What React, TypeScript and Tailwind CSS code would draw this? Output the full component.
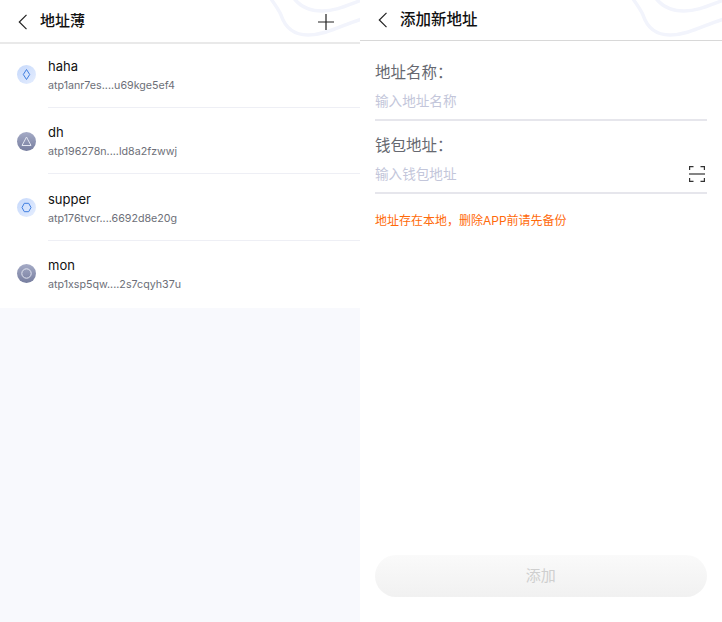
type Contact = {
  name: string;
  address: string;
  shape: "diamond" | "triangle" | "hexagon" | "circle";
};

const contacts: Contact[] = [
  { name: "haha", address: "atp1anr7es....u69kge5ef4", shape: "diamond" },
  { name: "dh", address: "atp196278n....ld8a2fzwwj", shape: "triangle" },
  { name: "supper", address: "atp176tvcr....6692d8e20g", shape: "hexagon" },
  { name: "mon", address: "atp1xsp5qw....2s7cqyh37u", shape: "circle" },
];

const fontStack = "font-['Inter','Noto_Sans_CJK_SC',sans-serif]";

function HeaderWaves() {
  return (
    <svg
      className="absolute right-0 top-0 pointer-events-none"
      width="90"
      height="42"
      viewBox="0 0 90 42"
      fill="none"
    >
      <path
        d="M-4 -8 C3 2 8 8 11 15 C15 27 24 35 38 35 C56 35 72 25 92 19"
        stroke="#f2f4fc"
        strokeWidth="3.5"
      />
      <path
        d="M20 -8 C26 4 36 11 52 11 C66 11 78 5 92 0"
        stroke="#f2f4fc"
        strokeWidth="3.5"
      />
    </svg>
  );
}

function BackArrow() {
  return (
    <svg width="10" height="16" viewBox="0 0 10 16" fill="none">
      <path d="M8.5 0.8 L1.3 8 L8.5 15.2" stroke="#222222" strokeWidth="1.2" />
    </svg>
  );
}

function CoinIcon({ shape }: { shape: Contact["shape"] }) {
  const isDark = shape === "triangle" || shape === "circle";
  const stroke = isDark ? "#e4e7f2" : "#3f7ee0";

  return (
    <div
      className={
        isDark
          ? "w-[19px] h-[19px] rounded-full bg-gradient-to-b from-[#a5abc6] to-[#777e9f] flex items-center justify-center shrink-0"
          : "w-[19px] h-[19px] rounded-full bg-gradient-to-br from-[#c5d8fb] to-[#e6eefe] flex items-center justify-center shrink-0"
      }
    >
      <svg width="13" height="13" viewBox="0 0 13 13" fill="none" stroke={stroke} strokeWidth="1">
        {shape === "diamond" && <path d="M6.5 1.5 L9.7 6.5 L6.5 11.5 L3.3 6.5 Z" />}
        {shape === "triangle" && <path d="M6.5 2 L11 10.5 L2 10.5 Z" />}
        {shape === "hexagon" && <path d="M4.3 2.3 L8.7 2.3 L11 6.5 L8.7 10.7 L4.3 10.7 L2 6.5 Z" />}
        {shape === "circle" && <circle cx="6.5" cy="6.5" r="4.7" />}
      </svg>
    </div>
  );
}

function ContactRow({ contact, last }: { contact: Contact; last: boolean }) {
  return (
    <div className="flex items-center h-[66.4px]">
      <div className="pl-[17px] w-[48px] shrink-0">
        <CoinIcon shape={contact.shape} />
      </div>
      <div
        className={
          last
            ? "flex-1 h-full flex flex-col pt-[14.4px]"
            : "flex-1 h-full flex flex-col pt-[14.4px] border-b border-[#eeeff5]"
        }
      >
        <div className="text-[13px] leading-[20px] text-[#111111]">{contact.name}</div>
        <div className="text-[10.7px] leading-[14px] mt-[3px] text-[#6d6f78]">{contact.address}</div>
      </div>
    </div>
  );
}

function AddressBook() {
  return (
    <div className="w-[360px] h-full flex flex-col bg-[#f8f9fd]">
      <div className="relative h-[44px] bg-white border-b-2 border-[#e9e9e9] flex items-center pl-[18px] pr-[26px] shrink-0 overflow-hidden">
        <HeaderWaves />
        <div className="mt-[1px]">
          <BackArrow />
        </div>
        <span className="ml-[12px] text-[15px] font-medium text-[#111111]">地址薄</span>
        <svg className="ml-auto mt-[2px] relative" width="16" height="16" viewBox="0 0 16 16" fill="none">
          <path d="M8 0 V16 M0 8 H16" stroke="#222222" strokeWidth="1.2" />
        </svg>
      </div>
      {/* rows sit slightly under the header */}
      <div className="bg-white -mt-[2.4px] h-[266px] shrink-0">
        {contacts.map((contact, i) => (
          <ContactRow key={contact.name} contact={contact} last={i === contacts.length - 1} />
        ))}
      </div>
    </div>
  );
}

function Field({
  label,
  placeholder,
  scan,
}: {
  label: string;
  placeholder: string;
  scan?: boolean;
}) {
  return (
    <div className="border-b-2 border-[#e6e6ec]">
      <div className="text-[15.5px] leading-[22px] pt-[1px] text-[#666870]">{label}</div>
      <div className="flex items-center justify-between h-[35px]">
        <span className="text-[13.6px] text-[#c3c6da]">{placeholder}</span>
        {scan && (
          <svg className="mr-[1.5px] -mt-[1px]" width="16" height="16" viewBox="0 0 16 16" fill="none" stroke="#333333" strokeWidth="1.2">
            <path d="M0.6 4 V0.6 H4.5 M11.5 0.6 H15.4 V4 M0.6 12 V15.4 H4.5 M11.5 15.4 H15.4 V12" />
            <path d="M0 8 H16" />
          </svg>
        )}
      </div>
    </div>
  );
}

function AddAddress() {
  return (
    <div className="flex-1 h-full flex flex-col bg-white">
      <div className="relative h-[41px] border-b border-[#d8d8d8] flex items-center pl-[18px] pb-[1px] shrink-0 overflow-hidden">
        <HeaderWaves />
        <BackArrow />
        <span className="ml-[12px] text-[15.5px] font-medium text-[#111111]">添加新地址</span>
      </div>

      <div className="flex-1 flex flex-col pl-[15px] pr-[15.5px] pt-[20px] pb-[25px]">
        <div className="flex flex-col gap-[13px]">
          <Field label="地址名称：" placeholder="输入地址名称" />
          <Field label="钱包地址：" placeholder="输入钱包地址" scan />
        </div>

        <div className="mt-[19px] text-[12px] leading-[16px] text-[#ff6a0a]">
          地址存在本地，删除APP前请先备份
        </div>

        {/* disabled button */}
        <button className="mt-auto h-[42px] rounded-full bg-gradient-to-b from-[#fafafa] to-[#f1f1f1] text-[15px] text-[#cfcfcf]">
          添加
        </button>
      </div>
    </div>
  );
}

export default function App() {
  return (
    <div className={`w-[722px] h-[622px] flex overflow-hidden bg-white ${fontStack}`}>
      <AddressBook />
      <AddAddress />
    </div>
  );
}
